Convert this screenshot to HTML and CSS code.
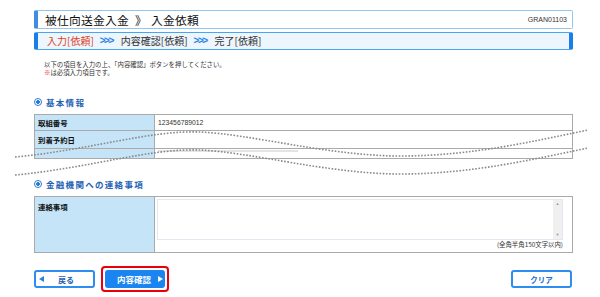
FILE: index.html
```html
<!DOCTYPE html>
<html lang="ja">
<head>
    <meta charset="UTF-8">
    <meta name="viewport" content="width=device-width, initial-scale=1.0">
    <title>被仕向送金入金 入金依頼</title>
    <link rel="stylesheet" href="styles.css">
</head>
<body>
<div class="page">
    <div class="title-bar">
        <h1>被仕向送金入金<span class="crumb">》</span>入金依頼</h1>
        <span class="screen-id">GRAN01103</span>
    </div>
    <div class="steps">
        <span class="step current">入力[依頼]</span>
        <span class="sep">&gt;&gt;&gt;</span>
        <span class="step">内容確認[依頼]</span>
        <span class="sep">&gt;&gt;&gt;</span>
        <span class="step">完了[依頼]</span>
    </div>

    <p class="note">以下の項目を入力の上、「内容確認」ボタンを押してください。<br><span class="req">※</span>は必須入力項目です。</p>

    <h2 class="section"><span class="mark"></span>基本情報</h2>
    <div class="field-grid basic">
        <div class="label">取組番号</div>
        <div class="value">123456789012</div>
        <div class="label">到着予約日</div>
        <div class="value"></div>
        <div class="label"></div>
        <div class="value"><span class="input-top"></span></div>
    </div>

    <h2 class="section"><span class="mark"></span>金融機関への連絡事項</h2>
    <div class="field-grid contact">
        <div class="label">連絡事項</div>
        <div class="value">
            <div class="memo">
                <textarea class="memo-text"></textarea>
                <div class="memo-scroll"><span>▲</span><span>▼</span></div>
            </div>
            <div class="hint">(全角半角150文字以内)</div>
        </div>
    </div>

    <div class="actions">
        <button type="button" class="button back"><span class="arrow-left"></span>戻る</button>
        <div class="focus-frame">
            <button type="button" class="button primary">内容確認<span class="arrow-right"></span></button>
        </div>
        <button type="button" class="button clear">クリア</button>
    </div>

    <!-- page cut marks drawn over the form -->
    <svg class="cut-line" viewBox="0 120 600 65" width="600" height="65">
        <path d="M15,157 C90,150 150,130 200,132 S330,156 400,156 S530,142 588,130"/>
        <path d="M15,175 C90,168 150,148 200,150 S330,174 400,174 S530,160 588,148"/>
    </svg>
</div>
</body>
</html>
```

FILE: styles.css
```css
body {
    margin: 0;
    font-family: "Noto Sans CJK JP", sans-serif;
    color: #222;
    background-color: #fff;
}
.page {
    width: 539px;
    margin-left: 34px;
    padding-top: 10px;
}
.title-bar {
    display: flex;
    align-items: center;
    justify-content: space-between;
    height: 19px;
    box-sizing: border-box;
    border: 1px solid #8fc6f2;
    border-left: 4px solid #3d8de0;
    border-radius: 2px;
    padding: 0 5px 0 7px;
}
.title-bar h1 {
    margin: 0;
    font-size: 11.8px;
    font-weight: normal;
    line-height: 1;
    color: #111;
    letter-spacing: 0.2px;
}
.title-bar .crumb {
    margin: 0 4px 0 6px;
}
.screen-id {
    font-family: "Liberation Sans", sans-serif;
    font-size: 7px;
    color: #333;
}
.steps {
    display: flex;
    align-items: center;
    gap: 6px;
    margin-top: 3px;
    height: 18px;
    box-sizing: border-box;
    border: 1px solid #4aa3f5;
    border-left: 4px solid #1a7ee8;
    border-right: 4px solid #1a7ee8;
    border-radius: 2px;
    background-color: #edf5fd; /* pale blue strip */
    padding-left: 9px;
    font-size: 10px;
    line-height: 1;
    color: #333;
}
.step.current {
    color: #e2401c;
}
.sep {
    font-family: "Liberation Sans", sans-serif;
    font-size: 10px;
    font-weight: bold;
    color: #2a86e0;
    letter-spacing: -1.5px;
    margin-right: 2px;
}
.note {
    margin: 11px 0 0 10px;
    font-size: 6.4px;
    line-height: 8px;
    color: #333;
}
.note .req {
    color: #e8201c;
}
.section {
    display: flex;
    align-items: center;
    gap: 4px;
    margin: 20px 0 7px;
    height: 10px;
    font-size: 8.5px;
    font-weight: bold;
    line-height: 1;
    letter-spacing: 1.3px;
    color: #1f63b4;
}
.section .mark {
    width: 6px;
    height: 6px;
    border: 1px solid #2a7ad6;
    border-radius: 50%;
    background: radial-gradient(circle, #2a7ad6 0 1.6px, #fff 2px);
}
.field-grid {
    display: grid;
    grid-template-columns: 120px 418px;
    border-top: 1px solid #aaa;
    border-left: 1px solid #aaa;
}
.field-grid.basic {
    grid-template-rows: 16px 18px 10px;
}
.field-grid.contact {
    grid-template-rows: 56px;
}
.field-grid .label,
.field-grid .value {
    box-sizing: border-box;
    border-right: 1px solid #aaa;
    border-bottom: 1px solid #aaa;
    padding: 0 3px;
    display: flex;
    align-items: center;
}
.field-grid .label {
    background-color: #c5e4f8;
    font-size: 7.4px;
    font-weight: bold;
    color: #111;
}
.field-grid .value {
    font-family: "Liberation Sans", sans-serif;
    font-size: 6.8px;
    color: #333;
    background-color: #fff;
}
.input-top {
    align-self: flex-start;
    width: 140px;
    height: 2px;
    margin-top: 1px;
    background-color: #e4e4e4;
}
.contact .label {
    align-items: flex-start;
    padding-top: 4px;
}
.contact .value {
    flex-direction: column;
    align-items: stretch;
    padding: 2px 9px 0 2px;
}
.memo {
    display: flex;
    height: 39px;
    border: 1px solid #e2e8ef;
}
.memo-text {
    flex: 1;
    border: none;
    resize: none;
    outline: none;
    padding: 0;
    background-color: #fff;
}
.memo-scroll {
    width: 9px;
    display: flex;
    flex-direction: column;
    justify-content: space-between;
    align-items: center;
    background-color: #f0f0f0;
    font-size: 4px;
    line-height: 8px;
    color: #999;
}
.hint {
    margin-top: 1px;
    text-align: right;
    font-family: "Noto Sans CJK JP", sans-serif;
    font-size: 6.4px;
    line-height: 8px;
    color: #333;
}
.actions {
    display: flex;
    align-items: center;
    gap: 6px;
    margin-top: 13px;
}
.button {
    display: flex;
    align-items: center;
    width: 61px;
    height: 18px;
    box-sizing: border-box;
    border: 2px solid #2b8ef0;
    border-radius: 3px;
    background-color: #fff;
    padding: 0;
    font-family: "Noto Sans CJK JP", sans-serif;
    font-size: 8px;
    font-weight: bold;
    color: #1f5fad;
    cursor: pointer;
}
.button.back {
    padding-left: 3px;
}
.button.back .arrow-left {
    width: 0;
    height: 0;
    border-right: 5px solid #2b7fe0;
    border-top: 3.5px solid transparent;
    border-bottom: 3.5px solid transparent;
    margin-right: 14px;
}
.focus-frame {
    padding: 2px;
    border: 2px solid #e8000b; /* red focus ring */
    border-radius: 4px;
}
.button.primary {
    width: 60px;
    border-color: #1a84f0;
    background-color: #1a84f0;
    color: #fff;
    font-size: 8.5px;
    padding-left: 10px;
}
.button.primary .arrow-right {
    width: 0;
    height: 0;
    border-left: 5px solid #fff;
    border-top: 3.5px solid transparent;
    border-bottom: 3.5px solid transparent;
    margin-left: 7px;
}
.button.clear {
    margin-left: auto;
    margin-right: 1px;
    justify-content: center;
    font-size: 7.5px;
    color: #1a6fd0;
}
.cut-line {
    position: absolute;
    left: 0;
    top: 120px;
    pointer-events: none;
}
.cut-line path {
    fill: none;
    stroke: #8a8a8a;
    stroke-width: 1.6;
    stroke-dasharray: 1.6 1.6;
}
```
